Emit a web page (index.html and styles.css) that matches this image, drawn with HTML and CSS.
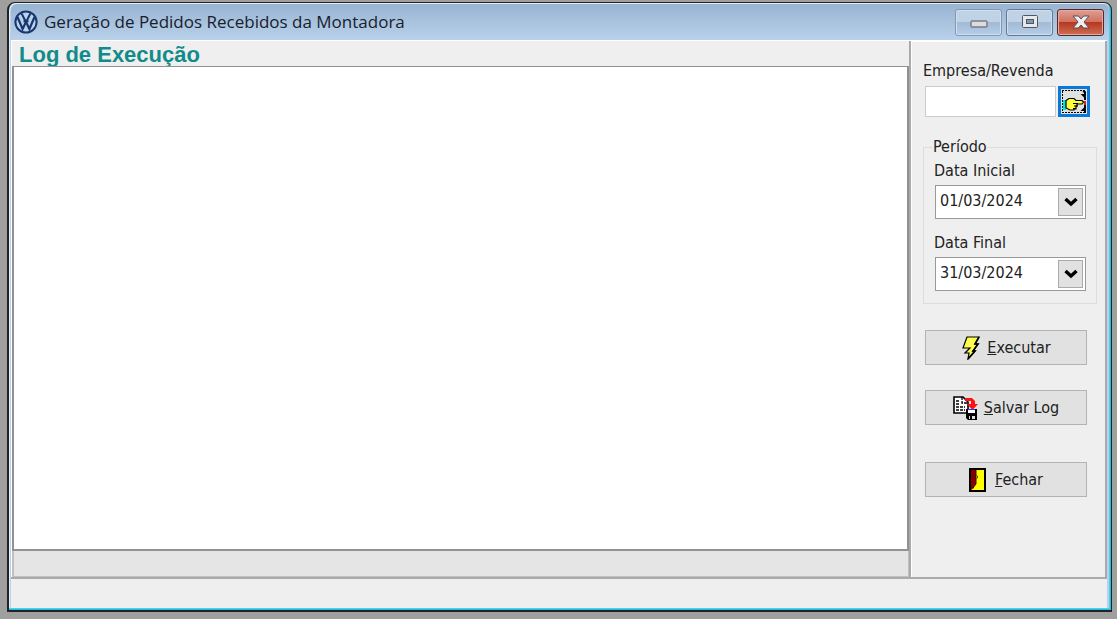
FILE: index.html
```
<!DOCTYPE html>
<html lang="pt-BR">
<head>
<meta charset="UTF-8">
<meta name="viewport" content="width=device-width, initial-scale=1.0">
<title>Geração de Pedidos Recebidos da Montadora</title>
<link rel="stylesheet" href="styles.css">
</head>
<body>

<div class="window">
    <header class="titlebar">
        <svg class="logo" width="24" height="24" viewBox="0 0 24 24" fill="none" stroke="#17376f">
            <circle cx="12" cy="12" r="10.6" fill="#bdd2ea" stroke-width="2"/>
            <path d="M7.6 3.5 L12 12.2 L16.4 3.5 M9.5 11.3 H14.5" stroke-width="2"/>
            <path d="M3.5 7 L8.6 19 L12 11.8 L15.4 19 L20.5 7" stroke-width="2.2"/>
        </svg>
        <h1 class="title">Geração de Pedidos Recebidos da Montadora</h1>
        <div class="controls">
            <button class="control minimize" type="button" aria-label="Minimizar">
                <svg width="18" height="14" viewBox="0 0 18 14"><rect x="1" y="6" width="16" height="6" rx="1" fill="#dcdcdc" stroke="#777e88" stroke-width="1.5"/></svg>
            </button>
            <button class="control" type="button" aria-label="Maximizar">
                <svg width="18" height="14" viewBox="0 0 18 14"><rect x="1.5" y=".5" width="15" height="12" rx="1" fill="#e8e8e8" stroke="#4c5765"/><rect x="5.5" y="4.5" width="7" height="4" fill="#7f9ab9" stroke="#4c5765"/></svg>
            </button>
            <button class="control close" type="button" aria-label="Fechar janela">
                <svg width="18" height="14" viewBox="0 0 18 14"><path d="M1 1H6.3L9 4L11.7 1H17L12 7L17 13H11.7L9 10L6.3 13H1L6 7Z" fill="#eee" stroke="#5d4b55"/></svg>
            </button>
        </div>
    </header>

    <div class="client">
        <main class="log-panel">
            <label class="log-title" for="log">Log de Execução</label>
            <textarea class="log" id="log" readonly></textarea>
            <div class="progress"></div>
        </main>

        <form class="sidebar">
            <label class="label" for="empresa">Empresa/Revenda</label>
            <div class="company">
                <input class="company-input" type="text" id="empresa">
                <button class="lookup" type="button" aria-label="Pesquisar empresa">
                    <svg width="26" height="25" viewBox="0 0 26 25">
                        <path d="M1 1.5H24M1 23.5H24M1.5 2V24" fill="none" stroke="#000" stroke-dasharray="2 1"/>
                        <path d="M22 2l2 1v3h-2l2 2v3M24 16v3l-2 2h2v3" fill="none" stroke="#000" stroke-width="2"/>
                        <path d="M2 11h3v10H2z" fill="#00e5e5"/>
                        <path d="M5 11.500l3-2h5l2 2h6l1.500 1.500-1.500 2h-5v2h-1v3h-2v1H9l-4-2z" fill="#ffff38" stroke="#000" stroke-width="1.2"/>
                        <path d="M12 14.500h5M13 17h4M12 19.500h3" fill="none" stroke="#000"/>
                        <path d="M23 12h2v4h-2z" fill="#ee1717"/>
                    </svg>
                </button>
            </div>

            <fieldset class="period">
                <legend>Período</legend>
                <label class="label" for="inicial">Data Inicial</label>
                <div class="date">
                    <input type="text" id="inicial" value="01/03/2024">
                    <button type="button" aria-label="Escolher data inicial">
                        <svg width="14" height="10" viewBox="0 0 14 10"><path d="M1.5 2 L7 7 L12.5 2" fill="none" stroke="#000" stroke-width="3.4"/></svg>
                    </button>
                </div>
                <label class="label" for="final">Data Final</label>
                <div class="date">
                    <input type="text" id="final" value="31/03/2024">
                    <button type="button" aria-label="Escolher data final">
                        <svg width="14" height="10" viewBox="0 0 14 10"><path d="M1.5 2 L7 7 L12.5 2" fill="none" stroke="#000" stroke-width="3.4"/></svg>
                    </button>
                </div>
            </fieldset>

            <div class="actions">
                <button class="action" type="button">
                    <svg width="20" height="24" viewBox="0 0 20 24"><path d="M6 1H18L14 8H17L12 15H14L7 23L8 17H4L9 12H2L6 1Z" fill="#ffff4d" stroke="#000" stroke-width="1.2"/><path d="M18 1L14 8H17L12 15H14L7 23" fill="none" stroke="#000" stroke-width="1.6"/></svg>
                    <span><u>E</u>xecutar</span>
                </button>
                <button class="action" type="button">
                    <svg width="25" height="24" viewBox="0 0 25 24">
                        <path d="M1 1h9l5 5v11H1z" fill="#fff" stroke="#000" stroke-width="1.6"/>
                        <path d="M9 1v6h6M3 5h4M3 8h4M3 11h9M3 14h9" fill="none" stroke="#000" stroke-width="1.3" stroke-dasharray="3 1"/>
                        <path d="M12 2h7l3 3v3h3l-5.500 6L14 8h4V5h-6z" fill="#f11"/>
                        <path d="M13 13h11v11H15l-2-2z" fill="#000"/>
                        <path d="M15 13h7v4h-7z" fill="#fff"/><path d="M15 13.5h7" stroke="#33f"/>
                        <path d="M16 20h6v3h-6z" fill="#ddd"/><path d="M18 20v3" stroke="#000" stroke-width="2"/>
                    </svg>
                    <span><u>S</u>alvar Log</span>
                </button>
                <button class="action exit" type="button">
                    <svg width="17" height="24" viewBox="0 0 17 24"><rect x="1" y="1" width="15" height="22" fill="#ff0" stroke="#000" stroke-width="2"/><path d="M2 2H7V16L5 18V20L2 22Z" fill="#850000"/><path d="M7 2V16L4 20" fill="none" stroke="#400"/><path d="M6.500 8h2v2h-2z" fill="#dd0" stroke="#000" stroke-width=".6"/></svg>
                    <span><u>F</u>echar</span>
                </button>
            </div>
        </form>
    </div>

    <footer class="statusbar"></footer>
</div>

</body>
</html>
```
FILE: styles.css
```
* {
    box-sizing: border-box;
}
body {
    display: flex;
    height: 100vh;
    margin: 0;
    padding: 2px 5px 7px 7px;
    background: #9f9f9f;
    color: #222;
    font-family: "DejaVu Sans Condensed", "DejaVu Sans", sans-serif;
    font-size: 16px;
    line-height: 20px;
}
button, input, textarea {
    font: inherit;
    color: inherit;
}
svg {
    display: block;
    flex: none;
}
.window {
    display: flex;
    flex: 1;
    flex-direction: column;
    min-width: 0;
    border: 1px solid #222;
    border-width: 1px 1px 2px 2px;
    border-radius: 8px 8px 0 0;
    background: #b9d1ea;
    padding: 0 4px 2px 2px;
    box-shadow: inset -1px -1px #20bfd8, inset -2px -2px #50d0f0, inset 1px 1px #e5eef6;
}
.titlebar {
    display: flex;
    align-items: center;
    height: 36px;
    margin: 1px -2px 0 0;
    padding: 0 5px 0 3px;
    border-radius: 6px 6px 0 0;
    background: linear-gradient(#98b4d2, #b9d1ea);
}
.title {
    flex: 1;
    margin: 0 0 0 6px;
    color: #17202c;
    font-family: "Open Sans", "Noto Sans", sans-serif;
    font-size: 17px;
    font-weight: 400;
    line-height: 24px;
}
.controls {
    display: flex;
    gap: 4px;
}
.control {
    display: flex;
    align-items: center;
    justify-content: center;
    width: 47px;
    height: 27px;
    padding: 0;
    border: 1px solid #66788e;
    border-radius: 3px;
    background: linear-gradient(#c0d2e6 50%, #a2bad5 50%, #b5cde7);
    box-shadow: inset 0 0 0 1px #d0dfef;
}
.minimize {
    border-color: #8399b1;
}
.close {
    border-color: #58242b;
    background: linear-gradient(#df9f91, #cf6e5d 50%, #b73720 50%, #cb7055);
    box-shadow: inset 0 0 0 1px #e3ac9e;
}
.client {
    display: flex;
    flex: 1;
    min-height: 0;
    border-top: 1px solid #fff;
    border-bottom: 2px solid #aaa;
    background: #efefef;
}
.log-panel {
    display: flex;
    flex: 1;
    flex-direction: column;
    min-width: 0;
    border-left: 1px solid #fff;
}
.log-title {
    height: 25px;
    padding-left: 7px;
    color: #128b8b;
    font-family: "Liberation Sans", Arial, sans-serif;
    font-size: 22px;
    font-weight: bold;
    line-height: 28px;
}
.log {
    flex: 1;
    width: 100%;
    border: 1px solid #919191;
    border-width: 1px 2px 2px;
    background: #fff;
    outline: none;
    resize: none;
}
.progress {
    height: 26px;
    border: 1px solid #c0c0c0;
    border-width: 0 1px 1px 2px;
    background: #e5e5e5;
}
.sidebar {
    width: 198px;
    padding: 20px 8px 0 12px;
    border: solid #aaa;
    border-width: 0 2px 0 2px;
    box-shadow: inset 1px 1px #fff;
}
.label {
    display: block;
}
.company {
    display: flex;
    gap: 2px;
    margin: 5px 0 0 2px;
}
.company-input {
    width: 131px;
    height: 31px;
    border: 1px solid #ccc;
    background: #fff;
}
.lookup {
    display: flex;
    align-items: center;
    justify-content: center;
    width: 32px;
    height: 31px;
    padding: 0;
    border: 3px solid #0879d8;
    background: #e1e1e1;
}
.period {
    min-width: 0;
    height: 167px;
    margin: 20px 0 0;
    padding: 4px 10px 0;
    border: 1px solid #ddd;
}
.period legend {
    margin-left: -1px;
    padding: 0;
}
.date {
    display: flex;
    height: 34px;
    margin: 4px 0 14px 1px;
    padding: 2px;
    border: 1px solid #999;
    background: #fff;
}
.date input {
    flex: 1;
    min-width: 0;
    height: 24px;
    padding: 0 2px;
    border: 0;
    background: #fff;
}
.date button {
    display: flex;
    align-items: center;
    justify-content: center;
    width: 25px;
    padding: 0;
    border: 1px solid #aaa;
    background: #e1e1e1;
}
.actions {
    display: flex;
    flex-direction: column;
    gap: 25px;
    margin: 26px 10px 0 2px;
}
.action {
    display: flex;
    align-items: center;
    justify-content: center;
    gap: 6px;
    height: 35px;
    padding: 0;
    border: 1px solid #b3b3b3;
    background: #e1e1e1;
}
.action.exit {
    gap: 9px;
    margin-top: 12px;
}
.statusbar {
    height: 29px;
    background: #efefef;
}
```
